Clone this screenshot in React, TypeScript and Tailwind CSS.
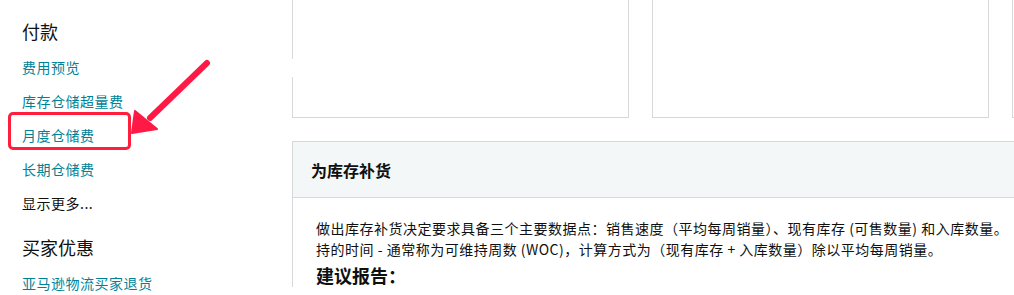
import React from 'react';

const font = "font-['Noto_Sans_CJK_SC','Noto_Sans',sans-serif]";

function NavLink({ label, dark }: { label: string; dark?: boolean }) {
  return (
    <div className={`h-[34px] leading-[34px] text-[14px] tracking-[0.5px] whitespace-nowrap ${dark ? 'text-[#0f1111]' : 'text-[#008296]'}`}>
      {label}
    </div>
  );
}

function Section({ title, children, first }: { title: string; children: React.ReactNode; first?: boolean }) {
  return (
    <div className={first ? '' : 'mt-[15px]'}>
      <h2 className="h-6 leading-6 text-[18px] text-[#0f1111]">{title}</h2>
      <div className="mt-[7px]">{children}</div>
    </div>
  );
}

export default function App() {
  return (
    <div className={`relative flex w-[1014px] h-[295px] overflow-hidden bg-white ${font}`}>
      {/* Sidebar */}
      <aside className="w-[292px] shrink-0 pl-[22px] pt-[19px]">
        <Section title="付款" first>
          <NavLink label="费用预览" />
          <NavLink label="库存仓储超量费" />
          <NavLink label="月度仓储费" />
          <NavLink label="长期仓储费" />
          <NavLink label="显示更多..." dark />
        </Section>
        <Section title="买家优惠">
          <NavLink label="亚马逊物流买家退货" />
        </Section>
      </aside>

      {/* Main */}
      <main className="flex-1 min-w-0">
        <div className="flex gap-[23px]">
          {[0, 1, 2].map(i => (
            <div key={i} className="w-[337px] h-[118px] shrink-0 border-x border-b border-[#d5d9d9] bg-white" />
          ))}
        </div>

        <div className="mt-[23px] w-[780px] border-l border-t border-[#d5d9d9]">
          <div className="h-[56px] flex items-center pl-[18px] bg-[#f4f7f8] border-b border-[#d5d9d9]">
            <h3 className="text-[16px] font-bold text-[#0f1111]">为库存补货</h3>
          </div>
          <div className="pl-[23px] pt-[20px] text-[#0f1111]">
            <p className="text-[14px] leading-[21px] tracking-[0.5px] whitespace-nowrap">
              做出库存补货决定要求具备三个主要数据点：销售速度（平均每周销量）、现有库存 (可售数量) 和入库数量。
            </p>
            <p className="text-[14px] leading-[21px] tracking-[0.5px] whitespace-nowrap">
              持的时间 - 通常称为可维持周数 (WOC)，计算方式为（现有库存 + 入库数量）除以平均每周销量。
            </p>
            <h4 className="mt-[3px] text-[18px] leading-6 font-bold">建议报告：</h4>
          </div>
        </div>
      </main>

      {/* Annotation layer */}
      <div className="absolute left-[291px] top-[59px] w-[3px] h-[18px] bg-white" />
      <div className="absolute left-[8px] top-[112px] w-[123px] h-[38px] rounded-[5px] border-[3px] border-[#ff1f3d]" />
      <svg className="absolute left-0 top-0 pointer-events-none" width="260" height="160" viewBox="0 0 260 160">
        <line x1="207" y1="63" x2="150" y2="118" stroke="#ff1a45" strokeWidth="6" strokeLinecap="round" />
        <polygon points="132,133 135,111 157,129" fill="#ff1a45" stroke="#ff1a45" strokeWidth="2" strokeLinejoin="round" />
      </svg>
    </div>
  );
}
